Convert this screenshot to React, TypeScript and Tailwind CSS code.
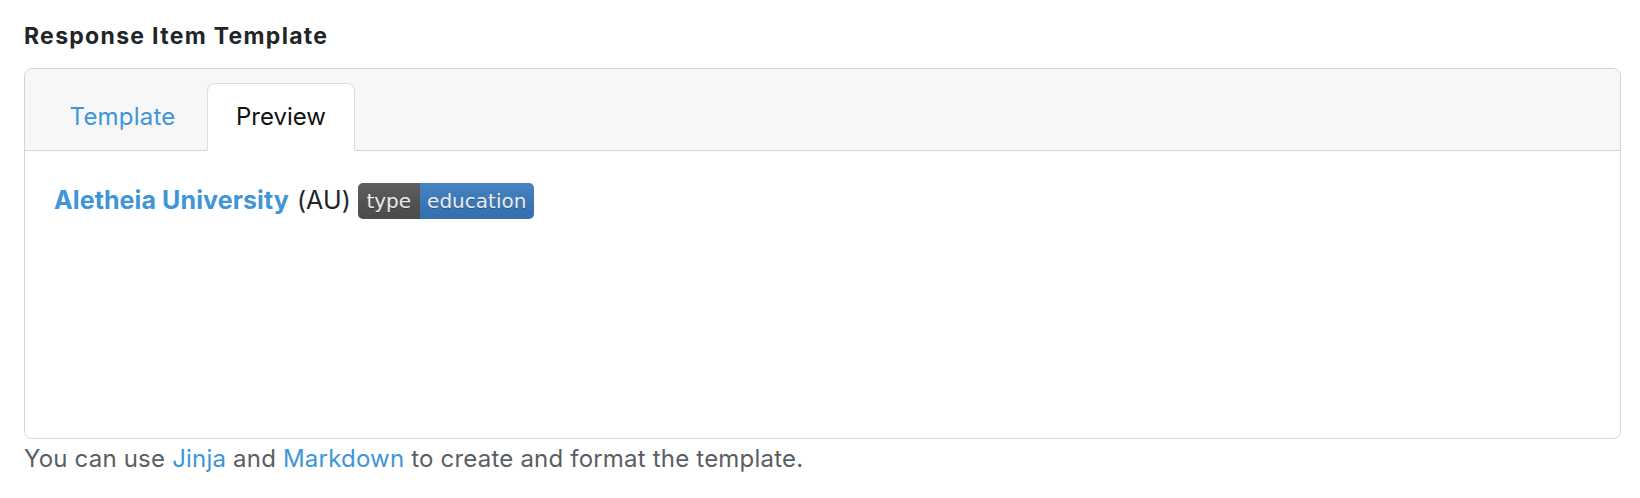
import React from 'react'

// Shields-style badge: label on grey, value on blue
function Badge({ label, value }: { label: string; value: string }) {
    return (
        <span
            className="relative inline-flex h-[36px] overflow-hidden rounded-[5px] text-[20px] leading-[36px] text-white"
            style={{ fontFamily: '"DejaVu Sans", Verdana, sans-serif' }}
        >
            <span className="bg-[#555555] px-[8.5px] [text-shadow:0_1px_0_rgba(1,1,1,0.3)]">{label}</span>
            <span className="bg-[#3b7ec3] px-[7.5px] [text-shadow:0_1px_0_rgba(1,1,1,0.3)]">{value}</span>
            <span className="pointer-events-none absolute inset-0 bg-gradient-to-b from-[rgba(187,187,187,0.1)] to-[rgba(0,0,0,0.1)]" />
        </span>
    )
}

export default function App() {
    return (
        <div
            className="bg-white pl-[24px] pr-[19px] pt-[23px] text-[#212529]"
            style={{ fontFamily: 'Inter, "Noto Sans", sans-serif' }}
        >
            {/* Heading */}
            <h2 className="text-[23px] font-bold leading-[26px] tracking-[1.3px] text-[#212529]">Response Item Template</h2>

            {/* Card with tabs */}
            <div className="mt-[19px] h-[371px] overflow-hidden rounded-[8px] border border-[#d3d4d6] flex flex-col">
                <div className="flex gap-[3px] border-b border-[#d3d4d6] bg-[#f7f7f7] pl-[16px] pt-[14px]">
                    <button className="-mb-px h-[68px] w-[163px] rounded-t-[8px] border border-transparent text-[24px] tracking-[0.2px] text-[#3e95d8]">
                        Template
                    </button>
                    <button className="-mb-px h-[68px] w-[148px] rounded-t-[8px] border border-[#dcdddf] border-b-white bg-white text-[24px] text-[#111]">
                        Preview
                    </button>
                </div>

                <div className="flex-1 bg-white px-[29px] pt-[32px]">
                    <div className="flex h-[36px] items-center text-[25px] tracking-[0.1px]">
                        <a href="#" className="font-bold text-[#3e95d8]">Aletheia University</a>
                        <span className="ml-[8px] text-[#212529]">(AU)</span>
                        <span className="ml-[7px] flex tracking-normal">
                            <Badge label="type" value="education" />
                        </span>
                    </div>
                </div>
            </div>

            {/* Footer help */}
            <p className="mt-[3px] text-[24px] leading-[34px] tracking-[0.2px] text-[#595e64]">
                You can use <a href="#" className="text-[#3e95d8]">Jinja</a> and{' '}
                <a href="#" className="text-[#3e95d8]">Markdown</a> to create and format the template.
            </p>
        </div>
    )
}
